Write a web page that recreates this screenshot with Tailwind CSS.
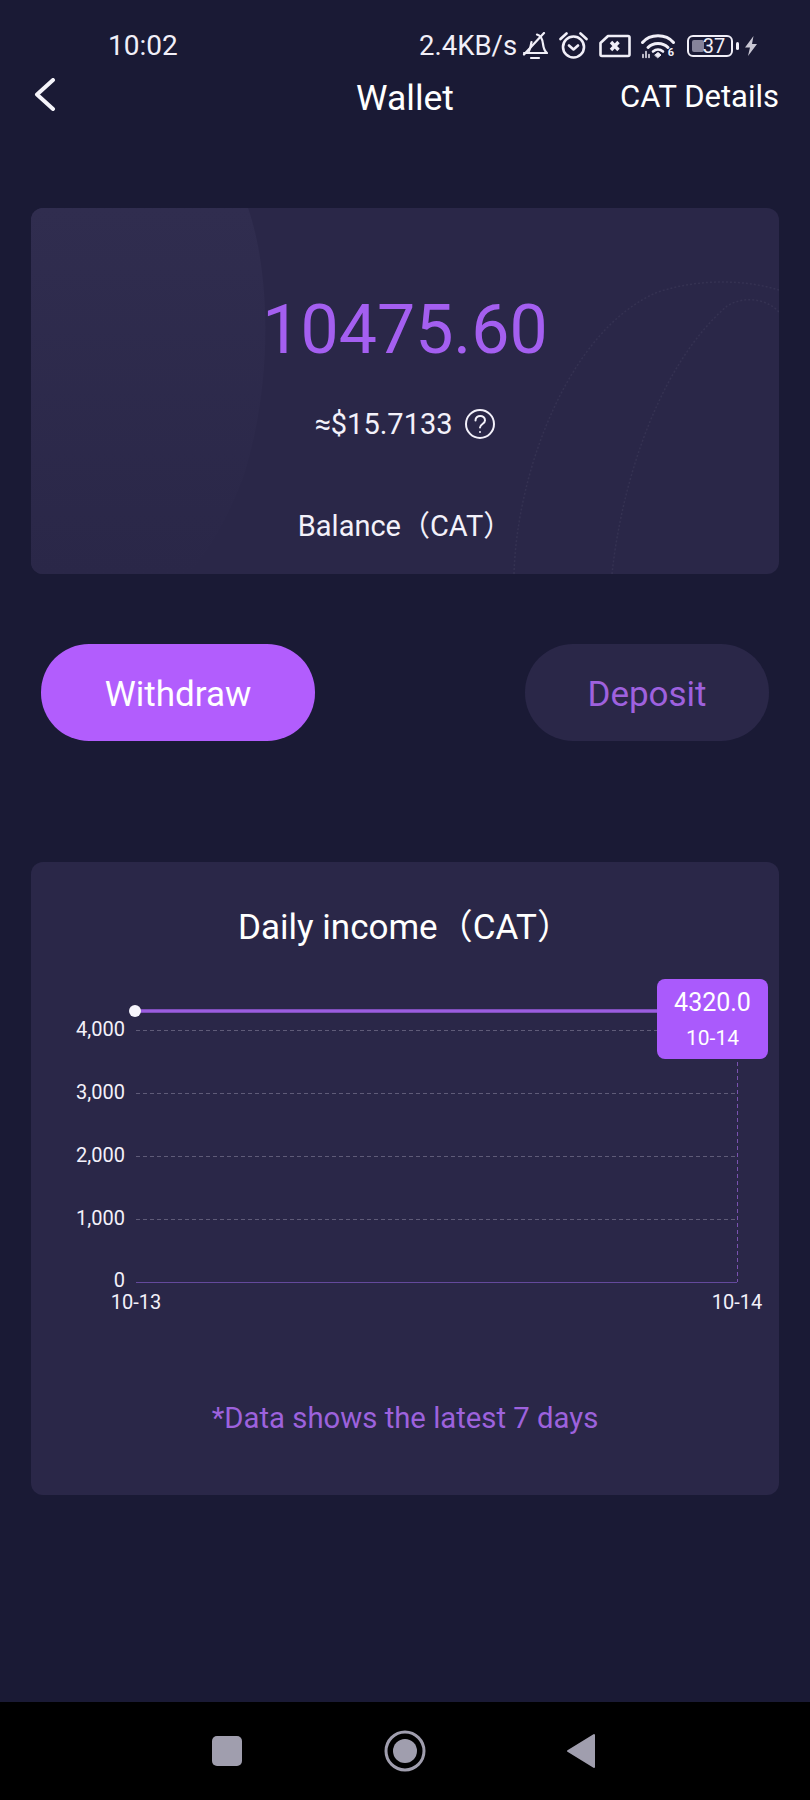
<!DOCTYPE html>
<html lang="en">
<head>
    <meta charset="UTF-8">
    <meta name="viewport" content="width=device-width, initial-scale=1.0">
    <title>Wallet</title>
    <script src="https://cdn.jsdelivr.net/npm/@tailwindcss/browser@4"></script>
</head>
<body class="bg-[#1a1a35] text-white font-['Roboto','Noto_Sans_CJK_SC',sans-serif]">
<div class="flex flex-col w-[810px] h-[1800px] overflow-hidden">

    <!-- status bar -->
    <div class="flex items-center h-[64px] pt-[28px] shrink-0 text-[#f1eff8]">
        <span class="ml-[108px] w-[72px] text-[28px] leading-[36px]">10:02</span>
        <span class="ml-[239px] w-[100px] text-[27.500px] leading-[36px] whitespace-nowrap">2.4KB/s</span>
        <svg class="ml-[3px] w-[26px] h-[28px] shrink-0" viewBox="0 0 26 28" fill="none" stroke="currentColor" stroke-width="2.200" stroke-linecap="round" stroke-linejoin="round">
            <path d="M2 21H25C22.500 19 21.500 16 21 12C20.500 7 18.500 3.500 15 2.500M7 19C8.500 16 9 13 9.500 10"/>
            <path d="M9 26H17M2 22.500L22 1"/>
        </svg>
        <svg class="ml-[11px] w-[30px] h-[28px] shrink-0" viewBox="0 0 30 28" fill="none" stroke="currentColor" stroke-width="2.600" stroke-linecap="round" stroke-linejoin="round">
            <circle cx="14.500" cy="15" r="10.500"/>
            <path d="M10 13.500l4.500 4 4.500-4M1.500 7l6-5.500M27.500 7l-6-5.500"/>
        </svg>
        <svg class="ml-[10px] w-[32px] h-[24px] shrink-0" viewBox="0 0 32 24" fill="none" stroke="currentColor" stroke-width="2.600" stroke-linejoin="round">
            <path d="M9 2h20a1.500 1.500 0 0 1 1.500 1.500v17a1.500 1.500 0 0 1-1.500 1.500H3a1.500 1.500 0 0 1-1.500-1.500V9z"/>
            <path d="M12 8l7.500 8M19.500 8l-7.500 8" stroke-width="3.400"/>
        </svg>
        <div class="relative ml-[9px] w-[36px] h-[26px] shrink-0">
            <svg class="w-[36px] h-[26px]" viewBox="0 0 36 26" fill="none" stroke="currentColor" stroke-linecap="round">
                <path d="M2.500 9.500C10 .5 26 .5 33.500 9.500" stroke-width="3"/>
                <path d="M8 14.500C13 9 23 9 28 14.500" stroke-width="3"/>
                <path d="M13 18.500C16 16 20 16 23 18.500" stroke-width="2.600"/>
                <path d="M15 22l3-2.500 3 2.500-3 2.500z" fill="currentColor" stroke-width="1"/>
                <path d="M3 24.500v-3M6 24.500v-6M9 24.500v-3" stroke-width="1.500"/>
            </svg>
            <span class="absolute right-[2px] bottom-0 text-[11px] leading-[13px] font-bold">6</span>
        </div>
        <div class="ml-[11px] flex items-center justify-center relative w-[46px] h-[22px] shrink-0 rounded-[6px] border-2 border-[#f1eff8]">
            <div class="absolute left-[3px] top-[3px] bottom-[3px] w-[12px] rounded-[2px] bg-[#85839a]"></div>
            <span class="relative text-[20px] leading-[18px] ml-[8px]">37</span>
        </div>
        <div class="ml-[3px] w-[3px] h-[8px] rounded-full bg-[#f1eff8] shrink-0"></div>
        <svg class="ml-[5px] w-[14px] h-[20px] shrink-0" viewBox="0 0 14 20" fill="#c9c7d4">
            <path d="M9.500 0L1 11.500h5L4 20l9-12H8z"/>
        </svg>
    </div>

    <!-- header -->
    <div class="relative flex items-center justify-end h-[64px] shrink-0 pr-[31px]">
        <svg class="absolute left-[33px] top-[14px] w-[24px] h-[33px]" viewBox="0 0 24 33" fill="none" stroke="#f5f4fa" stroke-width="4" stroke-linecap="round" stroke-linejoin="round">
            <path d="M20 2L4 16.500l16 14.500"/>
        </svg>
        <h1 class="absolute inset-x-0 pt-[4px] text-center text-[35.500px] leading-[44px] font-normal">Wallet</h1>
        <a class="pt-[2px] text-[31px] leading-[40px]">CAT Details</a>
    </div>

    <!-- balance card -->
    <div class="relative flex flex-col items-center mx-[31px] mt-[80px] h-[366px] shrink-0 overflow-hidden rounded-xl bg-[#2a2748]">
        <svg class="absolute inset-0 w-[748px] h-[366px]" viewBox="0 0 748 366" fill="none">
            <defs>
                <linearGradient id="cardGlow" x1="0" y1="0" x2="0" y2="1">
                    <stop offset="0" stop-color="#302d4f"/>
                    <stop offset="1" stop-color="#2a2748"/>
                </linearGradient>
            </defs>
            <path d="M0 0H217C238 60 244 170 212 270C196 312 178 342 158 366H0Z" fill="url(#cardGlow)"/>
            <path d="M483 366C486 260 540 120 627 84C670 70 715 72 748 82" stroke="#353252" stroke-width="1.500" stroke-dasharray="2 2"/>
            <path d="M581 366C590 280 625 160 696 98C712 88 735 90 748 104" stroke="#353252" stroke-width="1.500" stroke-dasharray="2 2"/>
        </svg>
        <div class="relative mt-[82px] text-[68px] leading-[80px] text-[#a45ff0]">10475.60</div>
        <div class="relative flex items-center gap-[11px] mt-[34px] h-[40px] text-[29px] leading-[40px] text-[#f3f1fa]">
            <span>≈$15.7133</span>
            <svg class="w-[32px] h-[32px]" viewBox="0 0 32 32" fill="none" stroke="currentColor" stroke-width="2" stroke-linecap="round">
                <circle cx="16" cy="16" r="14"/>
                <path d="M11.500 12.500c0-6 9.500-6 9.500 0 0 3.500-5 3.500-5 7"/>
                <circle cx="16" cy="24" r="1" fill="currentColor" stroke="none"/>
            </svg>
        </div>
        <div class="relative mt-[62px] text-[29px] leading-[40px] text-[#f3f1fa]">Balance（CAT）</div>
    </div>

    <!-- actions -->
    <div class="flex justify-between mx-[41px] mt-[70px] shrink-0">
        <button class="w-[274px] h-[97px] pt-[5px] rounded-[48px] bg-[#b25dfd] text-[35px]">Withdraw</button>
        <button class="w-[244px] h-[97px] pt-[5px] rounded-[48px] bg-[#2a2748] text-[35px] text-[#9e61de]">Deposit</button>
    </div>

    <!-- daily income -->
    <div class="relative flex flex-col items-center mx-[31px] mt-[121px] h-[633px] shrink-0 rounded-xl bg-[#2a2748]">
        <h2 class="mt-[44px] text-[35px] leading-[44px] font-normal">Daily income（CAT）</h2>
        <div class="relative mt-[24px] w-[748px] h-[350px]">
            <svg class="absolute inset-0 w-[748px] h-[350px]" viewBox="0 0 748 350" fill="none">
                <g stroke="#5f5b78" stroke-width="1" stroke-dasharray="4 3">
                    <path d="M105 56.500H706"/>
                    <path d="M105 119.500H706"/>
                    <path d="M105 182.500H706"/>
                    <path d="M105 245.500H706"/>
                </g>
                <path d="M105 308.500H706" stroke="#64499c" stroke-width="1"/>
                <path d="M706.500 60V308" stroke="#7a52b0" stroke-width="1" stroke-dasharray="4 3"/>
                <path d="M104 37H660" stroke="#9b5de0" stroke-width="3.500"/>
                <circle cx="104" cy="37" r="6" fill="#f7f5fc"/>
                <g fill="#f3f1fa" font-size="20" text-anchor="end">
                    <text x="94" y="62">4,000</text>
                    <text x="94" y="125">3,000</text>
                    <text x="94" y="188">2,000</text>
                    <text x="94" y="251">1,000</text>
                    <text x="94" y="313">0</text>
                </g>
                <g fill="#f3f1fa" font-size="20" text-anchor="middle">
                    <text x="105" y="335">10-13</text>
                    <text x="706" y="335">10-14</text>
                </g>
            </svg>
            <div class="absolute left-[626px] top-[5px] flex flex-col items-center w-[111px] h-[80px] rounded-lg bg-[#aa5afc]">
                <span class="mt-[8px] text-[25px] leading-[32px]">4320.0</span>
                <span class="mt-[5px] text-[21px] leading-[28px]">10-14</span>
            </div>
        </div>
        <p class="mt-[74px] text-[29.300px] leading-[40px] text-[#9d62dd]">*Data shows the latest 7 days</p>
    </div>

    <!-- nav bar -->
    <div class="flex items-center mt-auto h-[98px] shrink-0 bg-black">
        <div class="ml-[212px] w-[30px] h-[30px] rounded-[5px] bg-[#a09eae]"></div>
        <svg class="ml-[141px] w-[44px] h-[44px]" viewBox="0 0 44 44" fill="none">
            <circle cx="22" cy="22" r="19" stroke="#a09eae" stroke-width="3"/>
            <circle cx="22" cy="22" r="12" fill="#a09eae"/>
        </svg>
        <svg class="ml-[139px] w-[30px] h-[36px]" viewBox="0 0 30 36" fill="#a09eae" stroke="#a09eae" stroke-width="2" stroke-linejoin="round">
            <path d="M2 18L28 2V34Z"/>
        </svg>
    </div>
</div>
</body>
</html>
